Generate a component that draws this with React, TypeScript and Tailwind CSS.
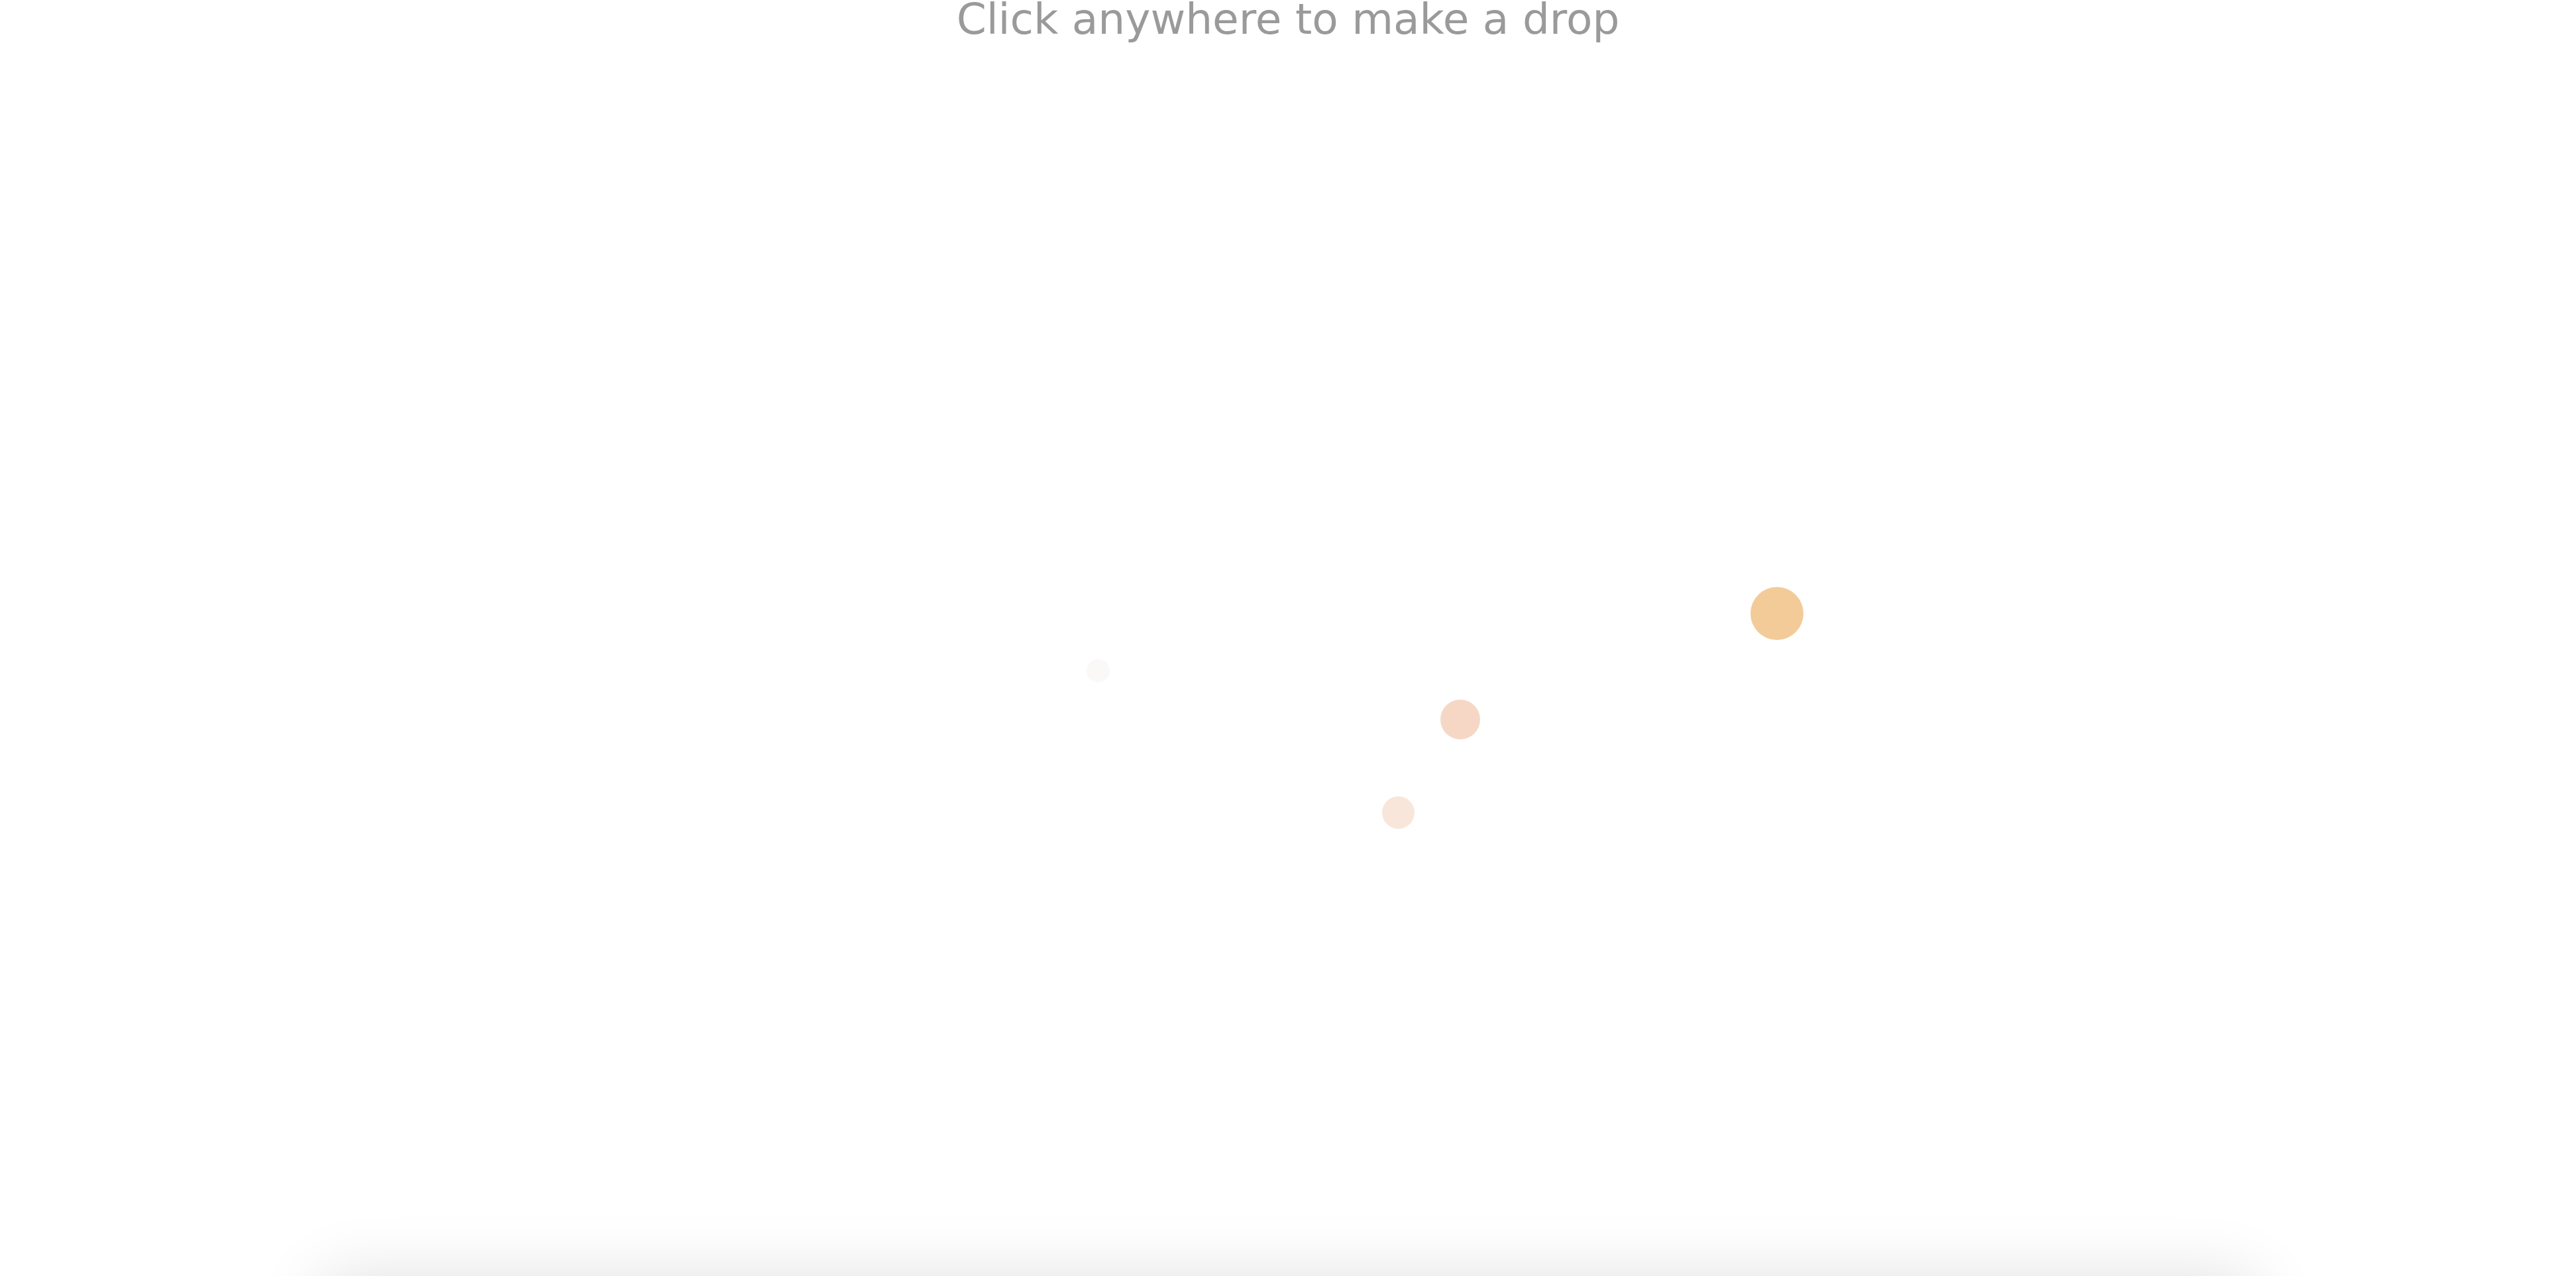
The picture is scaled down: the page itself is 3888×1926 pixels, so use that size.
type Drop = { id: number; left: number; top: number; size: number; color: string };

// drops already on the canvas, page coordinates
const drops: Drop[] = [
  { id: 1, left: 2642, top: 886, size: 80, color: '#f3cb99' },
  { id: 2, left: 2174, top: 1056, size: 60, color: '#f6d7c6' },
  { id: 3, left: 2086, top: 1202, size: 49, color: '#f9e6db' },
  { id: 4, left: 1640, top: 995, size: 35, color: '#fbf9f8' },
];

function DropDot({ drop }: { drop: Drop }) {
  return (
    <span
      className="absolute rounded-full"
      style={{ left: drop.left, top: drop.top, width: drop.size, height: drop.size, backgroundColor: drop.color }}
    />
  );
}

export default function App() {
  return (
    <div className="relative flex h-[1926px] w-full flex-col overflow-hidden bg-white">
      <h1 className="-mt-[3px] text-center font-['DejaVu_Sans',sans-serif] text-[64.5px] font-normal leading-none text-[#9a9a9a]">
        Click anywhere to make a drop
      </h1>
      <div className="flex-1" aria-label="Drop canvas" />
      {drops.map((drop) => (
        <DropDot key={drop.id} drop={drop} />
      ))}
      <div className="mx-auto -mb-[200px] h-[200px] w-[2930px] shrink-0 rounded-[40px] bg-white shadow-[0_0_100px_rgba(0,0,0,0.12)]" />
    </div>
  );
}
